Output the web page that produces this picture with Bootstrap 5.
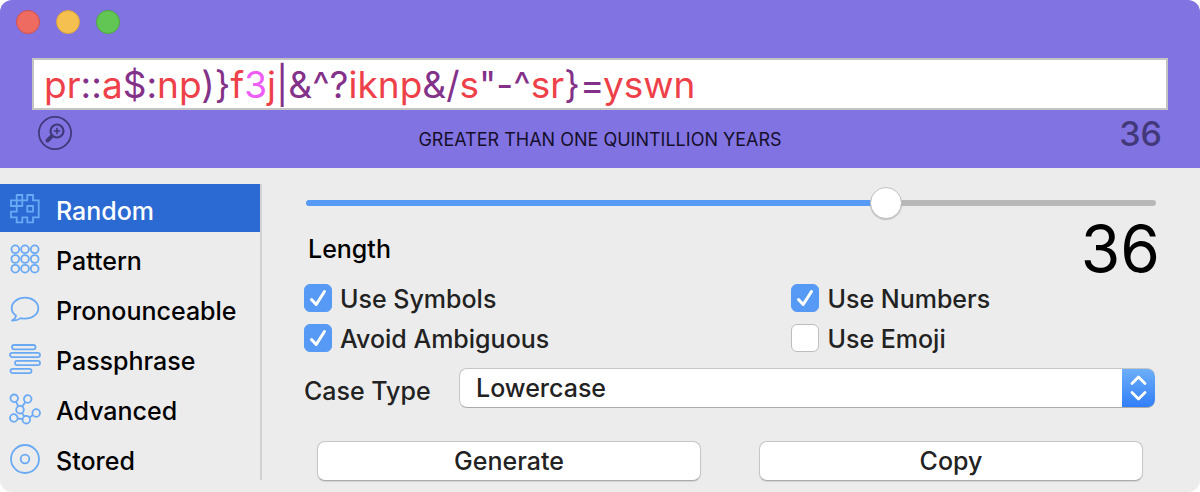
<!DOCTYPE html>
<html lang="en">
<head>
<meta charset="utf-8">
<meta name="viewport" content="width=device-width, initial-scale=1">
<title>Password Generator</title>
<link href="https://cdn.jsdelivr.net/npm/bootstrap@5.3.0/dist/css/bootstrap.min.css" rel="stylesheet">
<style>
  body { font-family: Inter, "Liberation Sans", sans-serif; font-size: 25px; font-weight: 500; line-height: 32px; color: #000; background: #fff; }
  .app-window { background: #ececec; border-radius: 12px; overflow: hidden; min-height: 100vh; }
  .app-head { background: #8273e3; padding: 10px 32px 16px; }
  .light { width: 24px; height: 24px; border-radius: 50%; border: 1px solid; padding: 0; }
  .light-close { background: #ed6b60; border-color: #d0504a; }
  .light-min { background: #f5c04f; border-color: #d6a13c; }
  .light-zoom { background: #62c655; border-color: #4da73f; }
  .lights { gap: 16px; margin: 0 -16px 24px; }
  .pw-field { background: #fff; border: 2px solid #c4c4c4; height: 52px; padding: 0 10px; font-size: 37px; font-weight: 400; line-height: 50px; color: #ee4048; white-space: nowrap; overflow: hidden; font-feature-settings: "calt" 0; outline: 0; }
  .pw-field .sym { color: #833189; }
  .pw-field .num { color: #ee5cf7; }
  .head-foot { display: grid; grid-template-columns: 1fr auto 1fr; padding: 6px 6px 0; height: 42px; }
  .head-foot .verdict { font-size: 18px; font-weight: 400; line-height: 24px; color: #150f29; padding-top: 12px; }
  .head-foot .count { font-size: 34px; line-height: 36px; color: #42397a; text-align: right; }
  .loupe { background: none; border: 0; padding: 0; width: 34px; height: 34px; display: block; }
  .loupe svg { display: block; }
  .app-body { padding: 16px 0 11px; }
  .app-side { width: 262px; border-right: 2px solid #d2d2d2; gap: 2px; flex: none; }
  .side-item { color: #000; height: 48px; padding: 6px 9px 0; gap: 15px; text-decoration: none; }
  .side-item:last-child { height: 46px; }
  .side-item svg { flex: none; width: 32px; height: 32px; margin-top: 3px; fill: none; stroke: #6aaaf5; stroke-width: 1.8; }
  .side-item span { padding-top: 5px; }
  .side-item.active { background: #2b6ad3; color: #fff; }
  .app-main { padding: 0 44px; min-width: 0; }
  .len-range { -webkit-appearance: none; appearance: none; display: block; width: 100%; height: 38px; margin: 0; background: none; }
  .len-range::-webkit-slider-runnable-track { height: 6px; border-radius: 3px; background: linear-gradient(to right, #569af5 var(--fill), #b7b8b7 var(--fill)); }
  .len-range::-webkit-slider-thumb { -webkit-appearance: none; width: 32px; height: 32px; margin-top: -13px; border-radius: 50%; background: #fff; border: 1px solid #c2c2c2; box-shadow: 0 1px 1px #0003; }
  .len-row { height: 60px; margin: 0 -4px 0 2px; }
  .len-row label { padding-top: 11px; }
  .len-row output { font-size: 64px; font-weight: 400; line-height: 54px; }
  .opts { display: grid; grid-template-columns: 4fr 3fr; column-gap: 4px; row-gap: 8px; color: #222; }
  .opts .opt { display: flex; gap: 8px; height: 32px; align-items: center; margin-left: -2px; }
  .opts label { padding-top: 2px; }
  .opts .form-check-input { width: 28px; height: 28px; margin: 0; border: 1px solid #bdbdbd; border-radius: 6px; background-color: #fff; flex: none; }
  .opts .form-check-input:checked { background-color: #569af5; border-color: #569af5; background-size: 26px 26px; background-image: url("data:image/svg+xml,%3Csvg xmlns='http://www.w3.org/2000/svg' viewBox='0 0 26 26' fill='none' stroke='white' stroke-width='3' stroke-linecap='round' stroke-linejoin='round'%3E%3Cpath d='M6.5 14.5l4.7 5L19.5 6.5'/%3E%3C/svg%3E"); }
  .case-row { color: #222; margin: 14px 1px 0 -2px; }
  .case-row label { width: 155px; flex: none; padding-top: 7px; }
  .case-select { height: 40px; border: 1px solid #c6c6c6; border-bottom-color: #ababab; border-radius: 8px; padding: 0 48px 0 16px; color: #222; font-size: 25px; font-weight: 500; line-height: 38px; background-color: #fff; background-origin: border-box; background-clip: border-box; background-position: right top; background-size: 33px 40px; background-repeat: no-repeat; border-right: 0;
    background-image: url("data:image/svg+xml,%3Csvg xmlns='http://www.w3.org/2000/svg' viewBox='0 0 33 40'%3E%3Cdefs%3E%3ClinearGradient id='g' x2='0' y2='1'%3E%3Cstop stop-color='%236eb0f8'/%3E%3Cstop offset='1' stop-color='%23307df8'/%3E%3C/linearGradient%3E%3C/defs%3E%3Crect width='33' height='40' fill='url(%23g)'/%3E%3Cpath d='M10 15.500l6.500-6.500 6.500 6.500M10 24.500l6.500 6.500 6.500-6.500' fill='none' stroke='white' stroke-width='2.800' stroke-linecap='round' stroke-linejoin='round'/%3E%3C/svg%3E"); }
  .actions { gap: 58px; padding: 0 13px 0 11px; margin-top: 33px; }
  .actions .btn { height: 40px; background: #fff; border: 1px solid #c6c6c6; border-bottom-color: #ababab; border-radius: 8px; padding: 0; font-size: 25px; font-weight: 500; line-height: 38px; color: #222; box-shadow: 0 1px 1px #0000001a; }
</style>
</head>
<body>
<div class="app-window d-flex flex-column">
  <header class="app-head">
    <div class="lights d-flex">
      <button class="light light-close" type="button" aria-label="Close"></button>
      <button class="light light-min" type="button" aria-label="Minimize"></button>
      <button class="light light-zoom" type="button" aria-label="Zoom"></button>
    </div>
    <div class="pw-field" role="textbox" contenteditable="true" spellcheck="false" aria-label="Password">pr<span class="sym">::</span>a<span class="sym">$:</span>np<span class="sym">)}</span>f<span class="num">3</span>j<span class="sym">|&amp;^?</span>iknp<span class="sym">&amp;/</span>s<span class="sym">"-^</span>sr<span class="sym">}=</span>yswn</div>
    <div class="head-foot">
      <button class="loupe" type="button" aria-label="Enlarge password">
        <svg width="34" height="34" viewBox="0 0 34 34" fill="none" stroke="#42397a"><circle cx="17" cy="17" r="16.100" stroke-width="1.800"/><circle cx="19" cy="15" r="6.500" stroke-width="2.200"/><path d="M19 11.800v6.400M15.800 15h6.400" stroke-width="1.600"/><path d="M14.400 19.600l-1.500 1.500" stroke-width="2.200"/><path d="M13.200 20.800l-3.700 3.700" stroke-width="4"  stroke-linecap="round"/></svg>
      </button>
      <div class="verdict">GREATER THAN ONE QUINTILLION YEARS</div>
      <div class="count">36</div>
    </div>
  </header>

  <div class="app-body d-flex flex-grow-1">
    <nav class="app-side d-flex flex-column align-self-start" aria-label="Generator">
      <a class="side-item d-flex active" href="#random" aria-current="page">
        <svg viewBox="0 0 32 32"><path d="M7.700 2h5.600v5.300h5V2H24v5.300h5.700v17H24v5h-5.700v-5h-5v5H7.700v-5H2v-5.600h5.700V13H2V7.300h5.700zM7.700 7.300h5.600V13H7.700zM18.300 13H24v5.700h-5.700z"/></svg><span>Random</span></a>
      <a class="side-item d-flex" href="#pattern">
        <svg viewBox="0 0 32 32"><circle cx="6.300" cy="6.300" r="3.900"/><circle cx="16" cy="6.300" r="3.900"/><circle cx="25.700" cy="6.300" r="3.900"/><circle cx="6.300" cy="16" r="3.900"/><circle cx="16" cy="16" r="3.900"/><circle cx="25.700" cy="16" r="3.900"/><circle cx="6.300" cy="25.700" r="3.900"/><circle cx="16" cy="25.700" r="3.900"/><circle cx="25.700" cy="25.700" r="3.900"/></svg><span>Pattern</span></a>
      <a class="side-item d-flex" href="#pronounceable">
        <svg viewBox="0 0 32 32"><path d="M7 22.500C4 20.500 2.700 18 2.700 15.200 2.700 9.300 8.600 4.700 16 4.700s13.300 4.600 13.300 10.500S23.400 25.700 16 25.700c-1.600 0-3-.2-4.400-.6-2.300 1.800-5.200 2.500-8.600 2.400 2.200-1 3.800-2.600 4-5z" stroke-linejoin="round"/></svg><span>Pronounceable</span></a>
      <a class="side-item d-flex" href="#passphrase">
        <svg viewBox="0 0 32 32"><rect x="3" y="2" width="23.500" height="4.300" rx="2.150"/><rect x="1" y="9.800" width="30" height="4.300" rx="2.150"/><rect x="6" y="17.800" width="25" height="4.300" rx="2.150"/><rect x="1.500" y="25.800" width="21" height="4.300" rx="2.150"/></svg><span>Passphrase</span></a>
      <a class="side-item d-flex" href="#advanced">
        <svg viewBox="0 0 32 32"><circle cx="5.200" cy="5.300" r="3.800"/><circle cx="18.700" cy="6" r="3.800"/><circle cx="11" cy="16.700" r="3.800"/><circle cx="4.800" cy="25" r="3.800"/><circle cx="17.300" cy="26.700" r="3.800"/><circle cx="27.200" cy="20" r="3.800"/><path d="M7 8.700l2.300 4.700M16.500 9l-3.400 4.600M13 20l2.400 3.400M8.600 25.500l5 .7M20.400 24.500l3.700-2.500"/></svg><span>Advanced</span></a>
      <a class="side-item d-flex" href="#stored">
        <svg viewBox="0 0 32 32"><circle cx="16" cy="16" r="14"/><circle cx="16" cy="16" r="4.300"/></svg><span>Stored</span></a>
    </nav>

    <main class="app-main flex-grow-1">
      <input class="len-range" id="length" type="range" min="5" max="50" value="36" style="--fill: 68%">
      <div class="len-row d-flex justify-content-between">
        <label for="length">Length</label>
        <output for="length">36</output>
      </div>
      <div class="opts">
        <div class="opt"><input class="form-check-input" type="checkbox" id="symbols" checked><label for="symbols">Use Symbols</label></div>
        <div class="opt"><input class="form-check-input" type="checkbox" id="numbers" checked><label for="numbers">Use Numbers</label></div>
        <div class="opt"><input class="form-check-input" type="checkbox" id="ambiguous" checked><label for="ambiguous">Avoid Ambiguous</label></div>
        <div class="opt"><input class="form-check-input" type="checkbox" id="emoji"><label for="emoji">Use Emoji</label></div>
      </div>
      <div class="case-row d-flex">
        <label for="case">Case Type</label>
        <select class="form-select case-select" id="case"><option>Lowercase</option><option>Uppercase</option><option>Mixed Case</option></select>
      </div>
      <div class="actions d-flex">
        <button class="btn flex-fill w-50" type="button">Generate</button>
        <button class="btn flex-fill w-50" type="button">Copy</button>
      </div>
    </main>
  </div>
</div>
<script src="https://cdn.jsdelivr.net/npm/bootstrap@5.3.0/dist/js/bootstrap.bundle.min.js"></script>
</body>
</html>
